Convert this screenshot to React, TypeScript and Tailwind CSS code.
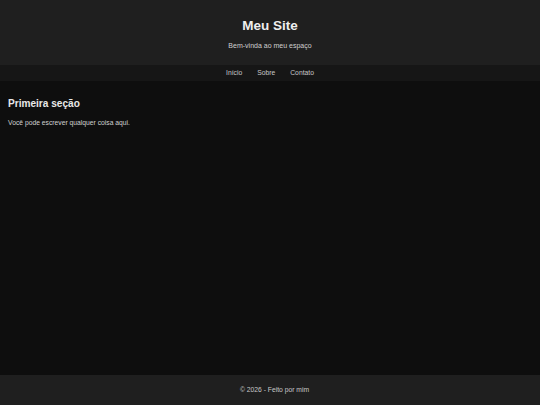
export default function App() {
  return (
    <div
      className="min-h-screen flex flex-col bg-[#0e0e0e] text-[#e0e0e0] antialiased"
      style={{ fontFamily: '"Liberation Sans", Arial, sans-serif' }}
    >
      <header className="bg-[#1f1f1f] h-[65px] pt-[18px] text-center">
        <h1 className="text-[13.5px] leading-[16px] font-bold text-[#eeeeee]">Meu Site</h1>
        <p className="mt-[8px] text-[7px] leading-[8px] text-[#d0d0d0]">Bem-vinda ao meu espaço</p>
      </header>
      <nav className="bg-[#161616] h-[16px] pt-[1px] flex items-center justify-center gap-[15px] text-[6.75px] text-[#c8c8c8]">
        <a>Início</a>
        <a>Sobre</a>
        <a>Contato</a>
      </nav>
      <main className="flex-1 px-[8px] pt-[17px]">
        <h2 className="text-[10.1px] leading-[12px] font-bold text-[#e8e8e8]">Primeira seção</h2>
        <p className="mt-[9px] text-[6.75px] leading-[8px] text-[#d0d0d0]">Você pode escrever qualquer coisa aqui.</p>
      </main>
      <footer className="bg-[#1f1f1f] h-[30px] pl-[9px] flex items-center justify-center text-[6.75px] text-[#c8c8c8]">
        © 2026 - Feito por mim
      </footer>
    </div>
  );
}
